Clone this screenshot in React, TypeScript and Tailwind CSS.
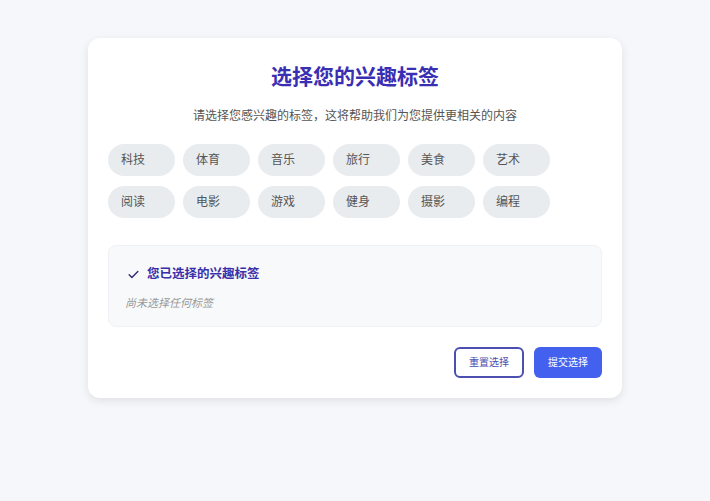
const tags = ["科技", "体育", "音乐", "旅行", "美食", "艺术", "阅读", "电影", "游戏", "健身", "摄影", "编程"];

export default function App() {
  return (
    <div
      className="min-h-[501px] bg-[#f6f7fb] pt-[38px]"
      style={{ fontFamily: '"Noto Sans", "Noto Sans CJK SC", sans-serif' }}
    >
      <div className="mx-auto w-[534px] rounded-xl bg-white px-5 pb-5 pt-[22px] shadow-[0_3px_10px_rgba(0,0,0,0.09)]">
        <h1 className="text-center text-[21px] font-bold leading-[32px] text-[#3a2fb3]">选择您的兴趣标签</h1>
        <p className="mt-[14px] text-center text-[12px] leading-[20px] text-[#555]">
          请选择您感兴趣的标签，这将帮助我们为您提供更相关的内容
        </p>

        <div className="mt-[18px] grid w-fit grid-cols-6 gap-x-2 gap-y-[10px]">
          {tags.map((tag) => (
            <button
              key={tag}
              className="h-[32px] w-[67px] rounded-full bg-[#e9ecef] pl-[13px] text-left text-[12px] text-[#555]"
            >
              {tag}
            </button>
          ))}
        </div>

        <div className="mt-[27px] rounded-lg border border-[#f0f1f4] bg-[#f8f9fb] px-4 pb-[14px] pt-[18px]">
          <div className="flex items-center gap-[7px] pl-[2px]">
            <svg width="13" height="13" viewBox="0 0 24 24" fill="none" stroke="#2e2a70" strokeWidth="2.6" strokeLinecap="round" strokeLinejoin="round">
              <path d="M4 12.5l5 5L20 6.5" />
            </svg>
            <span className="text-[12.5px] font-bold leading-[20px] text-[#3a2fa8]">您已选择的兴趣标签</span>
          </div>
          <p className="mt-[10px] text-[11px] italic leading-[18px] text-[#999]">尚未选择任何标签</p>
        </div>

        <div className="mt-5 flex justify-end gap-[10px]">
          <button className="h-[31px] w-[70px] rounded-md border-2 border-[#4a4fb0] bg-white text-[10px] text-[#4a4fb0]">
            重置选择
          </button>
          <button className="h-[31px] w-[68px] rounded-md bg-[#4361ee] text-[10px] text-white">提交选择</button>
        </div>
      </div>
    </div>
  );
}
